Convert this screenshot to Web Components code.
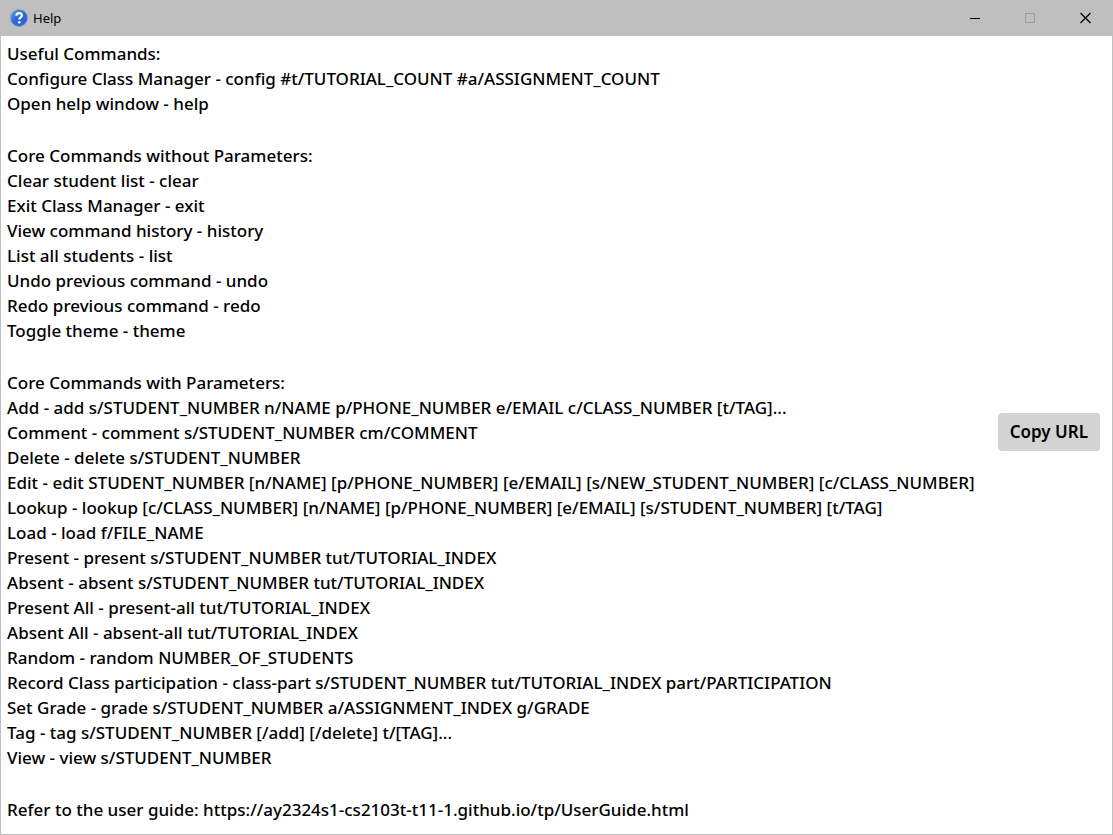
<!DOCTYPE html>
<html lang="en">
<head>
<meta charset="utf-8">
<title>Help</title>
<style>
  body {
    margin: 0;
    font-family: "Segoe UI", "Noto Sans", sans-serif;
    color: #000;
    background: #fff;
  }
</style>
</head>
<body>
<help-window>
  <title-bar slot="title">Help</title-bar>
  <command-group heading="Useful Commands:">
    <command-line>Configure Class Manager - config #t/TUTORIAL_COUNT #a/ASSIGNMENT_COUNT</command-line>
    <command-line>Open help window - help</command-line>
  </command-group>
  <command-group heading="Core Commands without Parameters:">
    <command-line>Clear student list - clear</command-line>
    <command-line>Exit Class Manager - exit</command-line>
    <command-line>View command history - history</command-line>
    <command-line>List all students - list</command-line>
    <command-line>Undo previous command - undo</command-line>
    <command-line>Redo previous command - redo</command-line>
    <command-line>Toggle theme - theme</command-line>
  </command-group>
  <command-group heading="Core Commands with Parameters:">
    <command-line>Add - add s/STUDENT_NUMBER n/NAME p/PHONE_NUMBER e/EMAIL c/CLASS_NUMBER [t/TAG]...</command-line>
    <command-line>Comment - comment s/STUDENT_NUMBER cm/COMMENT</command-line>
    <command-line>Delete - delete s/STUDENT_NUMBER</command-line>
    <command-line>Edit - edit STUDENT_NUMBER [n/NAME] [p/PHONE_NUMBER] [e/EMAIL] [s/NEW_STUDENT_NUMBER] [c/CLASS_NUMBER]</command-line>
    <command-line>Lookup - lookup [c/CLASS_NUMBER] [n/NAME] [p/PHONE_NUMBER] [e/EMAIL] [s/STUDENT_NUMBER] [t/TAG]</command-line>
    <command-line>Load - load f/FILE_NAME</command-line>
    <command-line>Present - present s/STUDENT_NUMBER tut/TUTORIAL_INDEX</command-line>
    <command-line>Absent - absent s/STUDENT_NUMBER tut/TUTORIAL_INDEX</command-line>
    <command-line>Present All - present-all tut/TUTORIAL_INDEX</command-line>
    <command-line>Absent All - absent-all tut/TUTORIAL_INDEX</command-line>
    <command-line>Random - random NUMBER_OF_STUDENTS</command-line>
    <command-line>Record Class participation - class-part s/STUDENT_NUMBER tut/TUTORIAL_INDEX part/PARTICIPATION</command-line>
    <command-line>Set Grade - grade s/STUDENT_NUMBER a/ASSIGNMENT_INDEX g/GRADE</command-line>
    <command-line>Tag - tag s/STUDENT_NUMBER [/add] [/delete] t/[TAG]...</command-line>
    <command-line>View - view s/STUDENT_NUMBER</command-line>
  </command-group>
  <guide-link href="https://ay2324s1-cs2103t-t11-1.github.io/tp/UserGuide.html">Refer to the user guide:</guide-link>
  <copy-button slot="action" value="https://ay2324s1-cs2103t-t11-1.github.io/tp/UserGuide.html">Copy URL</copy-button>
</help-window>

<script>
  const define = (name, html, setup) => {
    const template = document.createElement('template');
    template.innerHTML = html;
    customElements.define(name, class extends HTMLElement {
      constructor() {
        super();
        this.attachShadow({ mode: 'open' }).append(template.content.cloneNode(true));
      }
      connectedCallback() {
        if (setup) setup(this, this.shadowRoot);
      }
    });
  };

  define('help-window', `
    <style>
      :host {
        display: flex;
        flex-direction: column;
        box-sizing: border-box;
        min-height: 100vh;
        border: 1px solid #bfbfbf;
        border-top: 0;
      }
      main {
        display: flex;
        align-items: center;
        gap: 12px;
        padding: 5px 12px 5px 6px;
      }
      .text {
        flex: 1;
        min-width: 0;
        display: flex;
        flex-direction: column;
        gap: 27px;
        font-size: 17px;
        font-weight: 500;
        line-height: 25px;
      }
    </style>
    <slot name="title"></slot>
    <main>
      <div class="text"><slot></slot></div>
      <slot name="action"></slot>
    </main>`);

  define('title-bar', `
    <style>
      :host {
        display: flex;
        align-items: center;
        height: 36px;
        background: #bfbfbf;
        font-size: 13px;
      }
      .icon { width: 18px; height: 18px; margin: 0 5px 0 9px; }
      h1 { flex: 1; margin: 0; font-size: inherit; font-weight: 400; }
      button {
        display: flex;
        align-items: center;
        justify-content: center;
        width: 55px;
        height: 36px;
        padding: 0;
        border: 0;
        background: none;
        color: #000;
      }
      button:disabled { color: #999; }
      button svg { width: 12px; height: 12px; fill: none; stroke: currentColor; }
    </style>
    <svg class="icon" viewBox="0 0 18 18" aria-hidden="true">
      <defs>
        <linearGradient id="ball" x1="0" y1="0" x2="1" y2="1">
          <stop offset="0" stop-color="#6f9fec"/>
          <stop offset=".45" stop-color="#2f68d8"/>
          <stop offset="1" stop-color="#2a63d8"/>
        </linearGradient>
      </defs>
      <circle cx="9" cy="9" r="8.5" fill="url(#ball)" stroke="#7f9fd0" stroke-width=".8"/>
      <path d="M6.3 6.7C6.4 4.9 7.5 4.1 9.1 4.1C10.8 4.1 11.9 5 11.9 6.4C11.9 8.4 9.2 8.3 9.2 10.6" fill="none" stroke="#fff" stroke-width="2.1"/>
      <circle cx="9.2" cy="13.2" r="1.3" fill="#fff"/>
    </svg>
    <h1><slot></slot></h1>
    <button type="button" aria-label="Minimize"><svg viewBox="0 0 12 12"><path d="M1 6.5H11"/></svg></button>
    <button type="button" aria-label="Maximize" disabled><svg viewBox="0 0 12 12"><path d="M1.5 1.5H10.5V10.5H1.5Z"/></svg></button>
    <button type="button" aria-label="Close"><svg viewBox="0 0 12 12"><path d="M1.5 1L11.5 11M11.5 1L1.5 11" stroke-width="1.2"/></svg></button>`);

  define('command-group', `
    <style>
      :host { display: block; }
      h2 { margin: 0; font: inherit; }
    </style>
    <h2></h2>
    <slot></slot>`,
    (host, root) => { root.querySelector('h2').textContent = host.getAttribute('heading'); });

  define('command-line', `
    <style>:host { display: block; overflow-wrap: anywhere; }</style>
    <slot></slot>`);

  define('guide-link', `
    <style>
      :host { display: block; overflow-wrap: anywhere; }
      a { color: inherit; text-decoration: none; }
    </style>
    <slot></slot> <a></a>`,
    (host, root) => {
      const link = root.querySelector('a');
      link.href = link.textContent = host.getAttribute('href');
    });

  define('copy-button', `
    <style>
      :host { display: block; flex: none; }
      button {
        display: block;
        height: 38px;
        padding: 0 12px;
        border: 0;
        border-radius: 4px;
        background: #d3d3d3;
        color: #000;
        font-family: inherit;
        font-size: 17px;
        font-weight: 600;
        line-height: 38px;
        white-space: nowrap;
      }
    </style>
    <button type="button"><slot></slot></button>`,
    (host, root) => {
      root.querySelector('button').onclick = () => navigator.clipboard?.writeText(host.getAttribute('value'));
    });
</script>
</body>
</html>
